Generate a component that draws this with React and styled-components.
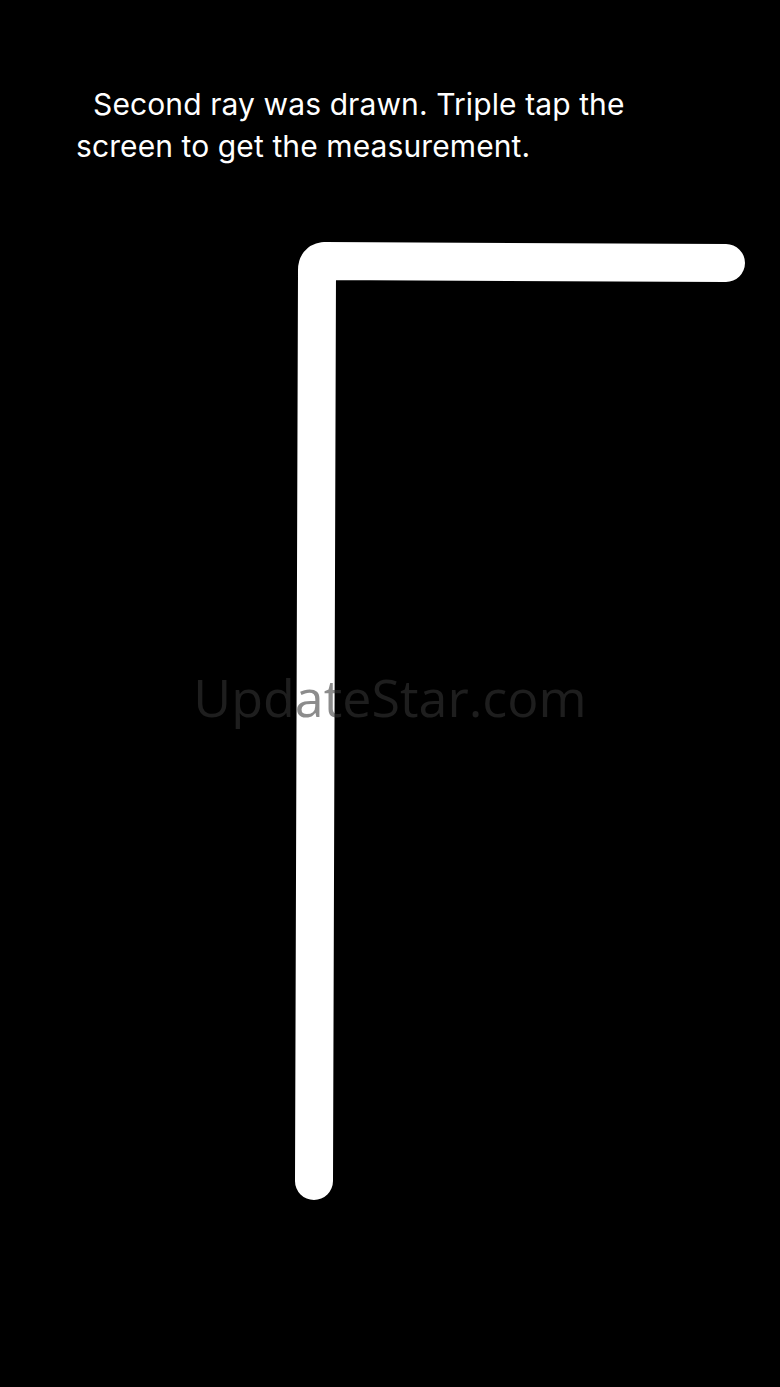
import React from 'react';
import styled, { createGlobalStyle } from 'styled-components';

const GlobalStyle = createGlobalStyle`
  html, body {
    margin: 0;
    padding: 0;
    background: #000;
  }
`;

const Screen = styled.div`
  position: relative;
  width: 780px;
  height: 1387px;
  background: #000;
  overflow: hidden;
`;

const Hint = styled.p`
  position: relative;
  margin: 0;
  padding: 83px 0 0 76px;
  width: 580px;
  white-space: pre-wrap;
  color: #fff;
  font-family: Inter, Roboto, "Liberation Sans", sans-serif;
  font-size: 30px;
  line-height: 42px;
  letter-spacing: 0.1px;
`;

const Drawing = styled.svg`
  position: absolute;
  inset: 0;
`;

const Watermark = styled.div`
  position: absolute;
  left: 0;
  right: 0;
  top: 662px;
  text-align: center;
  font-family: "Open Sans", "DejaVu Sans", sans-serif;
  font-size: 52px;
  line-height: 70px;
  color: rgba(53, 53, 53, 0.57);
  pointer-events: none;
`;

const App = () => {
  return (
    <>
      <GlobalStyle />
      <Screen>
        <Drawing width="780" height="1387" viewBox="0 0 780 1387">
          <path
            d="M 726 263 L 324 261 Q 317 262 317 270 L 314 1181"
            fill="none"
            stroke="#fff"
            strokeWidth="38"
            strokeLinecap="round"
            strokeLinejoin="round"
          />
        </Drawing>
        <Hint>{'  Second ray was drawn. Triple tap the screen to get the measurement.'}</Hint>
        <Watermark>UpdateStar.com</Watermark>
      </Screen>
    </>
  );
};

export default App;
